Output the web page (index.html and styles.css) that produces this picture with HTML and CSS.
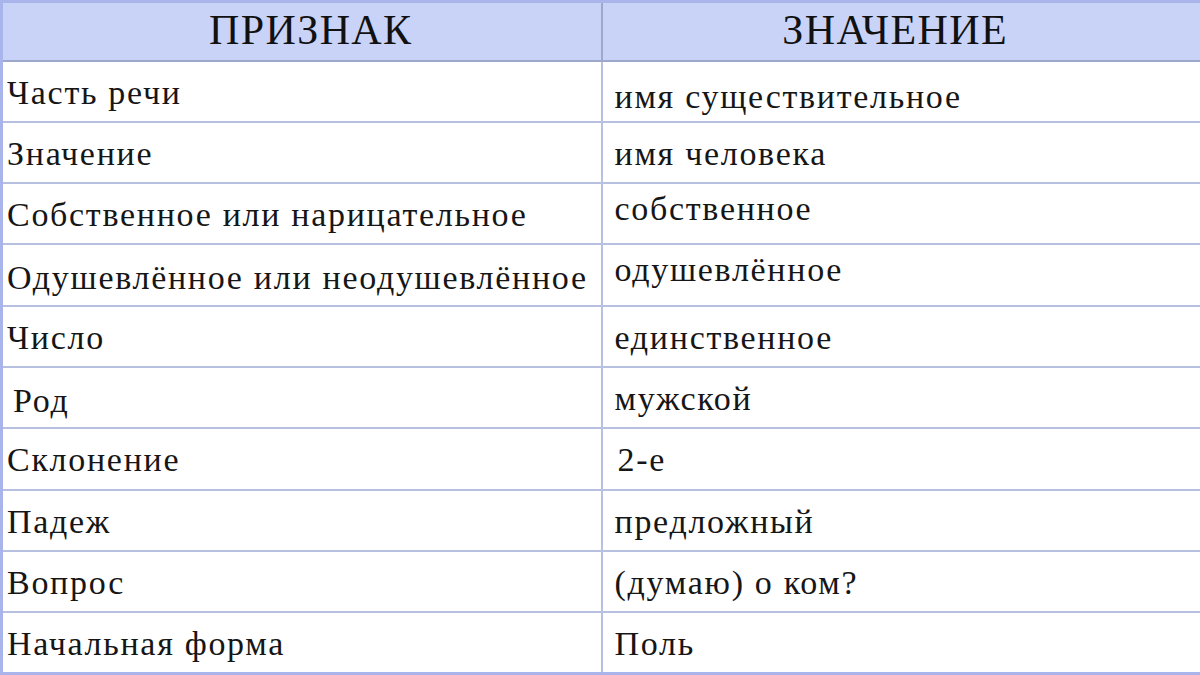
FILE: index.html
```html
<!DOCTYPE html>
<html lang="ru">
<head>
<meta charset="utf-8">
<title>Признаки существительного</title>
<link rel="stylesheet" href="styles.css">
</head>
<body>
<table class="grid">
  <colgroup><col class="col-a"><col class="col-b"></colgroup>
  <thead>
    <tr class="head-row"><th class="head-a">ПРИЗНАК</th><th class="head-b">ЗНАЧЕНИЕ</th></tr>
  </thead>
  <tbody>
    <tr><td>Часть речи</td><td class="down">имя существительное</td></tr>
    <tr><td>Значение</td><td>имя человека</td></tr>
    <tr><td>Собственное или нарицательное</td><td class="up">собственное</td></tr>
    <tr><td class="down">Одушевлённое или неодушевлённое</td><td class="up">одушевлённое</td></tr>
    <tr><td>Число</td><td>единственное</td></tr>
    <tr><td class="down indent">Род</td><td>мужской</td></tr>
    <tr><td>Склонение</td><td class="indent">2-е</td></tr>
    <tr><td>Падеж</td><td>предложный</td></tr>
    <tr><td>Вопрос</td><td>(думаю) о ком?</td></tr>
    <tr><td>Начальная форма</td><td>Поль</td></tr>
  </tbody>
</table>
</body>
</html>
```
FILE: styles.css
```css
html, body {
  margin: 0;
  padding: 0;
  background: #ffffff;
}
.grid {
  width: 1200px;
  height: 675px;
  border-collapse: collapse;
  table-layout: fixed;
  border: 3px solid #a9b5ea;
  font-family: "Liberation Serif", "DejaVu Serif", serif;
  color: #161616;
}
.col-a { width: 600px; }
.col-b { width: 600px; }
.head-row th {
  height: 59px;
  box-sizing: border-box;
  background: #c9d3f7;
  font-weight: normal;
  font-size: 42px;
  line-height: 44px;
  letter-spacing: 1.4px;
  text-align: center;
  vertical-align: top;
  padding: 5px 0 0 0;
  border: 2px solid #9ea8cc;
  border-top: none;
  color: #111111;
}
.head-row th.head-a { padding-left: 18px; }
.head-row th.head-b { padding-right: 12px; }
td {
  height: 61px;
  box-sizing: border-box;
  border: 2px solid #b7c0e0;
  padding: 13px 0 0 4px;
  vertical-align: top;
  font-size: 34px;
  line-height: 36px;
  letter-spacing: 1.7px;
  white-space: nowrap;
}
td + td { padding-left: 12px; }
td.down { padding-top: 15px; }
td + td.down { padding-top: 17px; }
td.up { padding-top: 7px; }
td.indent { padding-left: 10px; }
td + td.indent { padding-left: 15px; }
```
